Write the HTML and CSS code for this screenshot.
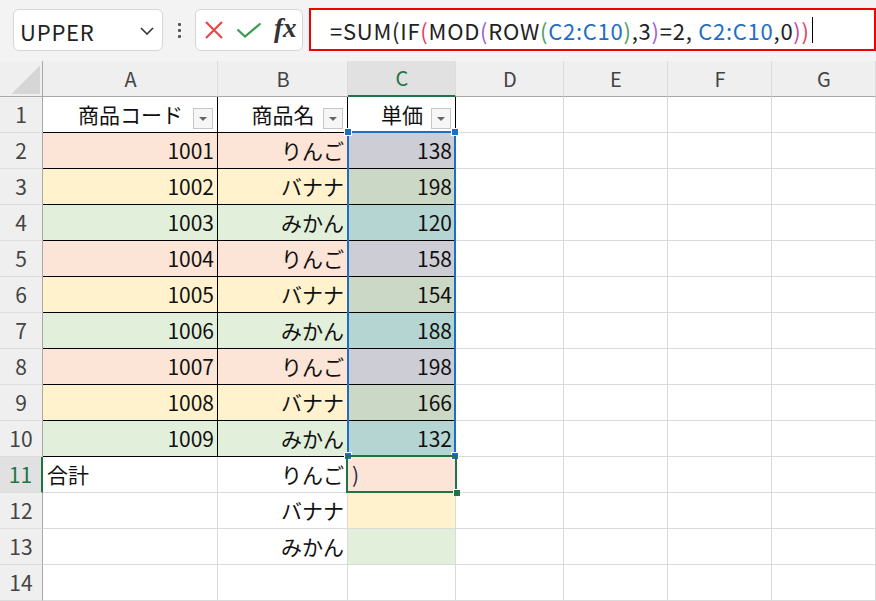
FILE: index.html
```html
<!DOCTYPE html>
<html lang="ja">
<head>
<meta charset="utf-8">
<title>Excel</title>
<link rel="stylesheet" href="styles.css">
</head>
<body>
<div class="toolbar">
  <div class="namebox"><span class="nm">UPPER</span>
    <svg class="chev" width="14" height="8" viewBox="0 0 14 8"><path d="M1 1 L7 7 L13 1" fill="none" stroke="#333" stroke-width="1.6"/></svg>
  </div>
  <div class="dots"><i></i><i></i><i></i></div>
  <div class="fxbox">
    <svg width="20" height="18" viewBox="0 0 20 18"><path d="M2 1 L18 17 M18 1 L2 17" stroke="#e8474a" stroke-width="2.2" fill="none"/></svg>
    <svg width="26" height="16" viewBox="0 0 26 16"><path d="M1.5 7.5 L9 14.5 L24.5 1.5" stroke="#3a9c52" stroke-width="2.2" fill="none"/></svg>
    <span class="fx">fx</span>
  </div>
  <div class="formula"><span class="ftext">=SUM(IF<span class="p1">(</span>MOD<span class="p2">(</span>ROW<span class="p3">(</span><span class="ref">C2:C10</span><span class="p3">)</span>,3<span class="p2">)</span>=2, <span class="ref">C2:C10</span>,0<span class="p4">)</span><span class="p1">)</span></span><span class="caret"></span></div>
</div>

<div class="sheet">
  <div class="c corner"></div><div class="c ch">A</div><div class="c ch">B</div><div class="c ch sel">C</div><div class="c ch">D</div><div class="c ch">E</div><div class="c ch">F</div><div class="c ch">G</div>

  <div class="c rh">1</div><div class="c hd tb">商品コード<span class="fb"></span></div><div class="c hd tb">商品名<span class="fb"></span></div><div class="c hd tb">単価<span class="fb"></span></div><div class="c"></div><div class="c"></div><div class="c"></div><div class="c"></div>

  <div class="c rh">2</div><div class="c r tb pk">1001</div><div class="c r tb pk">りんご</div><div class="c r tb cpk">138</div><div class="c"></div><div class="c"></div><div class="c"></div><div class="c"></div>
  <div class="c rh">3</div><div class="c r tb yl">1002</div><div class="c r tb yl">バナナ</div><div class="c r tb cyl">198</div><div class="c"></div><div class="c"></div><div class="c"></div><div class="c"></div>
  <div class="c rh">4</div><div class="c r tb gn">1003</div><div class="c r tb gn">みかん</div><div class="c r tb cgn">120</div><div class="c"></div><div class="c"></div><div class="c"></div><div class="c"></div>
  <div class="c rh">5</div><div class="c r tb pk">1004</div><div class="c r tb pk">りんご</div><div class="c r tb cpk">158</div><div class="c"></div><div class="c"></div><div class="c"></div><div class="c"></div>
  <div class="c rh">6</div><div class="c r tb yl">1005</div><div class="c r tb yl">バナナ</div><div class="c r tb cyl">154</div><div class="c"></div><div class="c"></div><div class="c"></div><div class="c"></div>
  <div class="c rh">7</div><div class="c r tb gn">1006</div><div class="c r tb gn">みかん</div><div class="c r tb cgn">188</div><div class="c"></div><div class="c"></div><div class="c"></div><div class="c"></div>
  <div class="c rh">8</div><div class="c r tb pk">1007</div><div class="c r tb pk">りんご</div><div class="c r tb cpk">198</div><div class="c"></div><div class="c"></div><div class="c"></div><div class="c"></div>
  <div class="c rh">9</div><div class="c r tb yl">1008</div><div class="c r tb yl">バナナ</div><div class="c r tb cyl">166</div><div class="c"></div><div class="c"></div><div class="c"></div><div class="c"></div>
  <div class="c rh">10</div><div class="c r tb gn">1009</div><div class="c r tb gn">みかん</div><div class="c r tb cgn">132</div><div class="c"></div><div class="c"></div><div class="c"></div><div class="c"></div>

  <div class="c rh sel">11</div><div class="c">合計</div><div class="c r">りんご</div><div class="c pk edit">)</div><div class="c"></div><div class="c"></div><div class="c"></div><div class="c"></div>
  <div class="c rh">12</div><div class="c"></div><div class="c r">バナナ</div><div class="c yl"></div><div class="c"></div><div class="c"></div><div class="c"></div><div class="c"></div>
  <div class="c rh">13</div><div class="c"></div><div class="c r">みかん</div><div class="c gn"></div><div class="c"></div><div class="c"></div><div class="c"></div><div class="c"></div>
  <div class="c rh">14</div><div class="c"></div><div class="c"></div><div class="c"></div><div class="c"></div><div class="c"></div><div class="c"></div><div class="c"></div>

  <div class="range"><i class="hdl tl"></i><i class="hdl tr"></i><i class="hdl bl"></i><i class="hdl br"></i></div>
  <div class="active"><i class="fill"></i></div>
</div>
</body>
</html>
```

FILE: styles.css
```css
html, body {
  margin: 0;
  padding: 0;
}
body {
  width: 876px;
  height: 601px;
  overflow: hidden;
  background: #f3f3f3;
  font-family: "Noto Sans CJK JP", "Noto Sans", sans-serif;
  color: #111;
}

/* toolbar */
.toolbar {
  display: flex;
  align-items: flex-start;
  height: 61px;
  box-sizing: border-box;
  padding: 9px 0 0 13px;
}
.namebox {
  width: 150px;
  height: 42px;
  box-sizing: border-box;
  border: 1px solid #d6d6d6;
  border-radius: 6px;
  background: #fff;
  display: flex;
  align-items: center;
  justify-content: space-between;
  padding: 0 8px 0 6px;
  font-size: 22px;
  color: #222;
}
.nm {
  letter-spacing: 0.8px;
  margin-top: 1px;
}
.chev {
  margin-top: 2px;
}
.dots {
  width: 32px;
  height: 42px;
  display: flex;
  flex-direction: column;
  align-items: center;
  justify-content: center;
  gap: 3px;
}
.dots i {
  display: block;
  width: 3px;
  height: 3px;
  background: #555;
  border-radius: 1px;
}
.fxbox {
  width: 108px;
  height: 42px;
  box-sizing: border-box;
  border: 1px solid #d6d6d6;
  border-radius: 6px;
  background: #fff;
  display: flex;
  align-items: center;
  padding-left: 8px;
  gap: 12px;
}
.fx {
  font-family: "Liberation Serif", "DejaVu Serif", serif;
  font-style: italic;
  font-weight: bold;
  font-size: 27px;
  color: #333;
  margin-left: 0;
  margin-top: -4px;
}
.formula {
  flex: 1;
  margin-left: 6px;
  margin-top: -1px;
  height: 43px;
  box-sizing: border-box;
  border: 2px solid #f20000;
  background: #fff;
  display: flex;
  align-items: center;
  padding-left: 19px;
  font-size: 22px;
  color: #222;
  white-space: pre;
}
.ftext {
  letter-spacing: 0.75px;
  margin-top: 1px;
}
.p1 { color: #e4415e; }
.p2 { color: #9b62cc; }
.p3 { color: #4f9d63; }
.p4 { color: #c04a9e; }
.ref { color: #1f6fc5; }
.caret {
  display: inline-block;
  width: 1px;
  height: 26px;
  background: #000;
  margin-left: 2px;
}

/* sheet */
.sheet {
  position: relative;
  display: grid;
  grid-template-columns: 43px 175px 130px 108px 108px 104px 104px 104px;
  grid-template-rows: repeat(15, 36px);
  background: #fff;
}
.c {
  box-sizing: border-box;
  border-right: 1px solid #dadada;
  border-bottom: 1px solid #dadada;
  display: flex;
  align-items: center;
  padding: 0 3px 1px 4px;
  font-size: 21px;
  white-space: nowrap;
  overflow: visible;
  color: #111;
}
.r { justify-content: flex-end; }
.hd {
  position: relative;
  justify-content: center;
}
.corner {
  background: #efefef linear-gradient(to top left, #d6d6d6 50%, transparent 50%) no-repeat;
  background-size: 29px 29px;
  background-position: right 2px bottom 2px;
  border-right: 1px solid #a8a8a8;
  border-bottom: 1px solid #a8a8a8;
}
.ch {
  background: #efefef;
  border-right: 1px solid #dcdcdc;
  border-bottom: 1px solid #a8a8a8;
  justify-content: center;
  color: #444;
  font-size: 20px;
}
.ch.sel {
  background: #e1e1e1;
  color: #217346;
  border-bottom: 2px solid #217346;
}
.rh {
  background: #efefef;
  border-right: 1px solid #a8a8a8;
  border-bottom: 1px solid #dcdcdc;
  justify-content: center;
  color: #444;
  font-size: 21px;
  padding: 0 0 1px 0;
}
.rh.sel {
  background: #e1e1e1;
  color: #217346;
  border-right: 2px solid #217346;
}
.tb {
  border-right-color: #000;
  border-bottom-color: #000;
}
.pk { background: #fce4d6; }
.yl { background: #fff2cc; }
.gn { background: #e2efda; }
.cpk { background: #cdcdd5; }
.cyl { background: #ccd8c6; }
.cgn { background: #b5d5d3; }
.edit { color: #1f2d4d; }

.fb {
  position: absolute;
  right: 4px;
  bottom: 3px;
  width: 20px;
  height: 21px;
  box-sizing: border-box;
  border: 1px solid #c6c6c6;
  background: #f6f6f6;
}
.fb::after {
  content: "";
  position: absolute;
  left: 5px;
  top: 8px;
  border-top: 4px solid #666;
  border-left: 4px solid transparent;
  border-right: 4px solid transparent;
}

/* overlays */
.range {
  position: absolute;
  left: 347px;
  top: 70px;
  width: 109px;
  height: 326px;
  box-sizing: border-box;
  border: 2px solid #1e6fc4;
  pointer-events: none;
}
.hdl {
  position: absolute;
  width: 6px;
  height: 6px;
  background: #1e6fc4;
  border: 1px solid #fff;
}
.tl { left: -5px; top: -5px; }
.tr { right: -5px; top: -5px; }
.bl { left: -5px; bottom: -5px; }
.br { right: -5px; bottom: -5px; }
.active {
  position: absolute;
  left: 346px;
  top: 394px;
  width: 111px;
  height: 38px;
  box-sizing: border-box;
  border: 2px solid #217346;
  pointer-events: none;
}
.fill {
  position: absolute;
  right: -5px;
  bottom: -5px;
  width: 6px;
  height: 6px;
  background: #217346;
  border-top: 1px solid #fff;
  border-left: 1px solid #fff;
}
```
